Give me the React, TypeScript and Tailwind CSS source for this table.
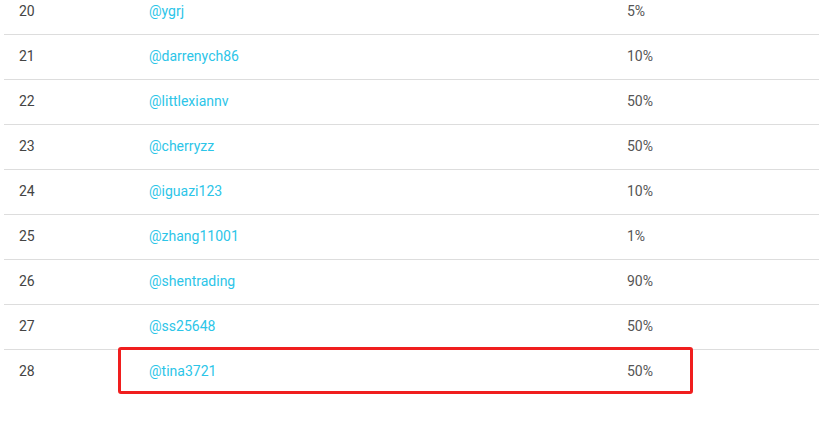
import React from "react";

const rows: [string, string, string][] = [
  ["20", "@ygrj", "5%"],
  ["21", "@darrenych86", "10%"],
  ["22", "@littlexiannv", "50%"],
  ["23", "@cherryzz", "50%"],
  ["24", "@iguazi123", "10%"],
  ["25", "@zhang11001", "1%"],
  ["26", "@shentrading", "90%"],
  ["27", "@ss25648", "50%"],
  ["28", "@tina3721", "50%"],
];

export default function App() {
  return (
    <div
      className="w-[819px] h-[424px] overflow-hidden bg-white relative"
      style={{ fontFamily: "Roboto, 'Noto Sans', sans-serif" }}
    >
      <div className="-mt-[10px] pl-[4px]">
        {rows.map((r, i) => (
          <div
            key={r[0]}
            className={`flex items-center h-[45px] pb-[2px] text-[14px] ${
              i < rows.length - 1 ? "border-b border-[#dddddd]" : ""
            }`}
          >
            <div className="w-[145px] pl-[15px] text-[#444444]">{r[0]}</div>
            <div className="w-[478px] text-[#2cc5e8]">{r[1]}</div>
            <div className="text-[#555555]">{r[2]}</div>
          </div>
        ))}
      </div>
      <div className="absolute left-[118px] top-[347px] w-[575px] h-[47px] border-[3px] border-[#f01e1e] rounded-[3px]" />
    </div>
  );
}
